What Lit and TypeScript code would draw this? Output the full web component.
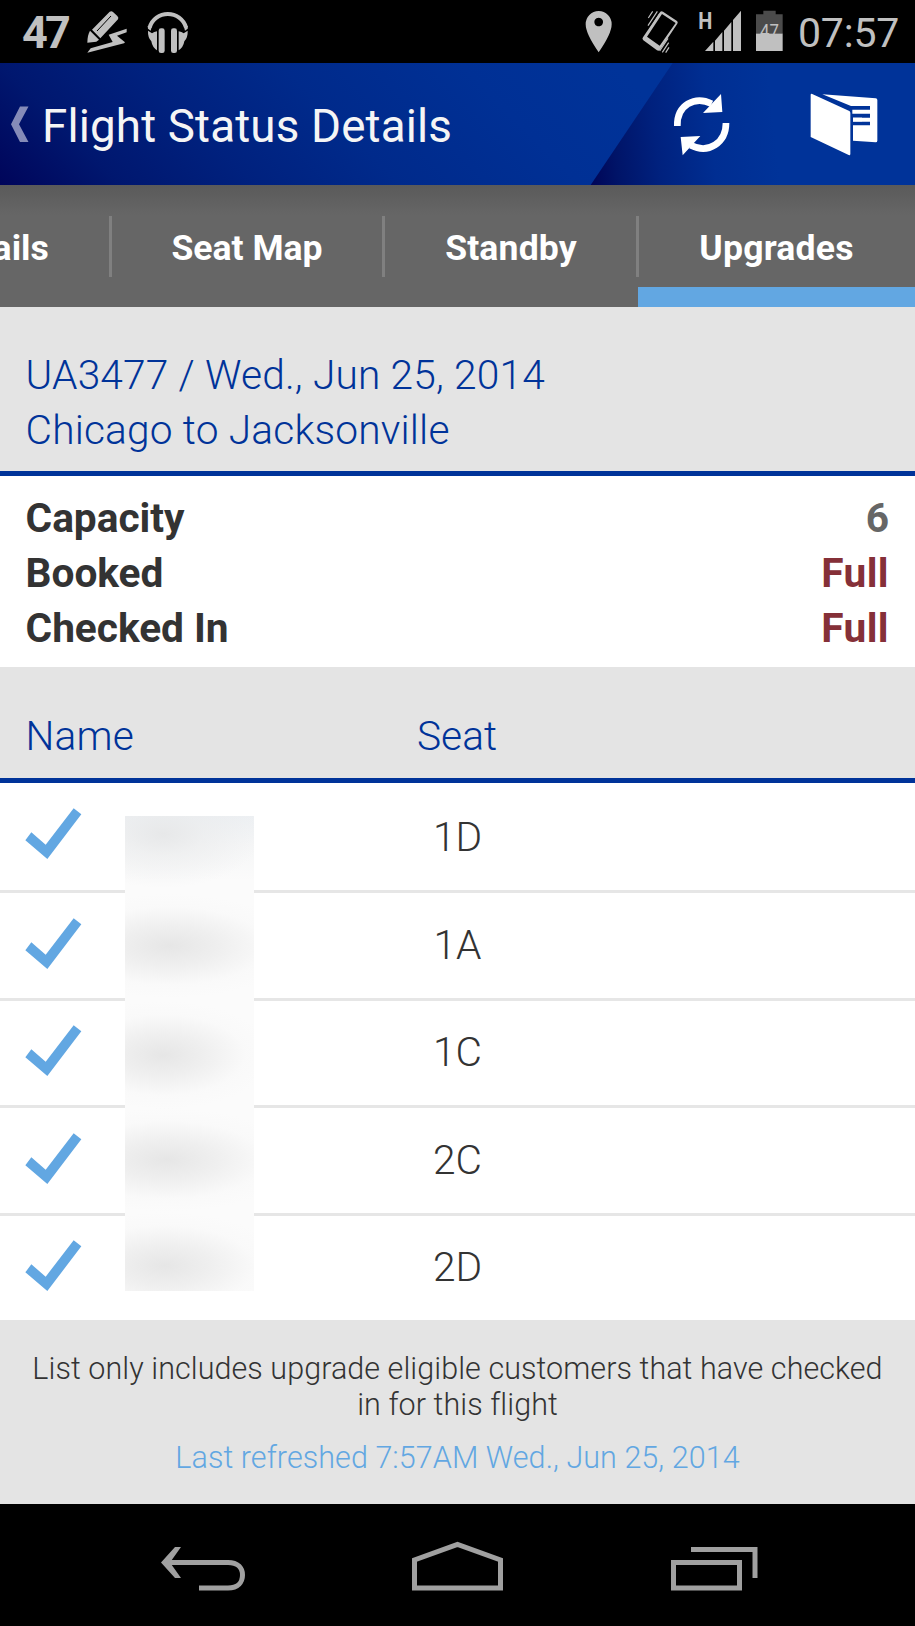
import { LitElement, html, css } from "lit";
import { customElement } from "lit/decorators.js";

const G = "#c0c0c0";

@customElement("status-bar")
class StatusBar extends LitElement {
  static styles = css`
    :host { display: flex; height: 63px; background: #000; color: #c0c0c0; font-family: Roboto, sans-serif; line-height: 65px; }
    svg { display: block; flex: none; }
    .pct { font-size: 45px; font-weight: 700; letter-spacing: -2.7px; margin-left: 22px; width: 63px; }
    .spacer { flex: 1; }
    .time { font-size: 41px; font-weight: 400; width: 117px; white-space: nowrap; letter-spacing: -0.2px; line-height: 67px; }
    .small { font: 700 23px Roboto, sans-serif; }
    .batt { font: 400 18px Roboto, sans-serif; }
  `;
  render() {
    return html`
      <span class="pct">47</span>
      <svg width="45" height="63" viewBox="255 0 135 189" fill=${G}>
        <path d="M329 35q6-3 10 1l13 12q5 5 2 10l-53 57-25-26z"/>
        <path d="M333 48l-42 45" stroke="#000" stroke-width="3" fill="none"/>
        <path d="M270 92l27 27-8 6-27 3q0-22 8-36z"/>
        <path d="M262 158l10-13 66-19-12-22 54-18v11l-29 10 24 20-3 3z"/>
      </svg>
      <svg width="150" height="63" viewBox="390 0 450 189" fill=${G}>
        <path d="M449 82A57 57 0 0 1 558 82" fill="none" stroke=${G} stroke-width="12"/>
        <path d="M443 78l12 3-3 11-8-6zM564 78l-12 3 3 11 8-6z"/>
        <rect x="476" y="85" width="18" height="74" rx="7"/><rect x="513" y="85" width="18" height="74" rx="7"/>
        <path d="M444 92l12 8q6-5 15-6v57q-14-9-17-27-11-12-10-32zM563 92l-12 8q-6-5-15-6v57q14-9 17-27 11-12 10-32z"/>
      </svg>
      <div class="spacer"></div>
      <svg width="238" height="63" viewBox="0 0 714 189" fill=${G}>
        <path fill-rule="evenodd" d="M116 33a39 39 0 0 1 39 40q0 28-39 84-39-56-39-84a39 39 0 0 1 39-40zm0 20a13 13 0 1 0 .1 0z"/>
        <path fill-rule="evenodd" d="M301 35q4-3 8 0l42 28q4 3 1 8l-52 78q-4 5-9 2l-41-30q-5-4-1-9zm5 7l-45 68 38 27 48-68z"/>
        <path d="M264 77l28-43M268 90l31-49M265 54l13-20M307 157l19-29M317 158l10-16M299 153l25-38" stroke=${G} stroke-width="3.5" fill="none"/>
        <text class="small" transform="translate(415 88) scale(2.6 3)">H</text>
        <path d="M435 153l25-28v28zM465 153v-31l22-26v57zM492 153V92l22-26v87zM519 153V60l24-28v121z"/>
        <path fill="#4b4b4b" d="M588 43h22V32h37v11h21v59h-80z"/><path d="M588 101h80v52h-80z"/>
        <text class="batt" transform="translate(600 110) scale(2.8 3)">47</text>
      </svg>
      <span class="time">07:57</span>`;
  }
}

@customElement("title-bar")
class TitleBar extends LitElement {
  static styles = css`
    :host { display: flex; align-items: stretch; height: 122px; font-family: Roboto, sans-serif;
      background: linear-gradient(45deg, #00055a 0, #00176f 86px, #00217e 180px, #002a8b 283px, #003095 411px, #003399 520px); color: #f5f5f5; }
    .back { flex: none; }
    h1 { margin: 0; font-size: 45.75px; font-weight: 400; line-height: 127px; letter-spacing: 0.15px; white-space: nowrap; width: 544px; }
    .actions { flex: none; }
    svg { display: block; }
  `;
  render() {
    return html`
      <svg class="back" width="42" height="122" viewBox="0 0 42 122"><path d="M20 43.500h8.500L19 61.200l9.500 17.800H20L11 61.200z" fill="#858bb8"/></svg>
      <h1>Flight Status Details</h1>
      <svg class="actions" width="329" height="122" viewBox="78 189 987 366" fill="#fff">
        <defs><linearGradient id="g" gradientUnits="userSpaceOnUse" x1="92" x2="650" y1="500" y2="440">
          <stop offset="0" stop-color="#000658"/><stop offset=".14" stop-color="#001468"/><stop offset=".36" stop-color="#00217e"/><stop offset=".66" stop-color="#002e92"/><stop offset="1" stop-color="#003399"/>
        </linearGradient></defs>
        <path d="M338 189H1065V555H92z" fill="url(#g)"/>
        <path d="M352 378C350 316 404 286 455 311M498 369C498 428 446 463 392 436" fill="none" stroke="#fff" stroke-width="20"/>
        <path d="M483 282l4 54-58 3zM362 411l59-3-53 58z"/>
        <path d="M755 281l113 52q3 2 3 6v124q-1 4-5 2L752 411V284q0-3 3-3z"/>
        <path d="M787 283l160 12q5 1 5 5v122q0 5-5 5l-68-5v-46h51v-11h-51v-12h51v-12h-53v-12h53v-11h-57z"/>
        <path d="M879 353h27v11h-27z"/>
      </svg>`;
  }
}

@customElement("tab-strip")
class TabStrip extends LitElement {
  static styles = css`
    :host { display: flex; height: 122px; background: linear-gradient(#5a5a5a, #666 30px); justify-content: flex-end; overflow: hidden; font-family: Roboto, sans-serif; }
    .tab { flex: none; box-sizing: border-box; display: flex; align-items: center; justify-content: center; color: #fff; font-weight: 700; font-size: 35.6px; border-bottom: 20px solid transparent; padding-top: 24px; white-space: nowrap; }
    .rule { flex: none; width: 3px; height: 61px; margin: 31px -1px 0 -2px; background: #808080; }
    .details { width: 235px; } .map { width: 273px; padding-right: 1px; } .standby { width: 254px; letter-spacing: 0.15px; }
    .upgrades { width: 277px; border-bottom-color: #62a7e2; letter-spacing: 0.2px; }
  `;
  render() {
    return html`<div class="tab details">Details</div><div class="rule"></div><div class="tab map">Seat Map</div><div class="rule"></div><div class="tab standby">Standby</div><div class="rule"></div><div class="tab upgrades">Upgrades</div>`;
  }
}

@customElement("app-root")
class AppRoot extends LitElement {
  static styles = css`
    :host { display: block; width: 915px; height: 1626px; overflow: hidden; background: #fff; font-family: Roboto, sans-serif; font-size: 40.67px; color: #333; }
    .info { box-sizing: border-box; height: 169px; background: #e4e4e4; border-bottom: 5px solid #039; color: #039; font-weight: 300; line-height: 55px; padding: 40.500px 25.600px 0; white-space: nowrap; letter-spacing: 0.17px; }
    .stats { box-sizing: border-box; height: 191px; padding: 15px 26px 0 25.600px; font-weight: 700; line-height: 55px; }
    .stat { display: flex; justify-content: space-between; }
    .label { letter-spacing: -0.05px; }
    .count { color: #666; } .full { color: #853038; letter-spacing: 0.4px; }
    .heads { box-sizing: border-box; height: 116px; background: #e4e4e4; border-bottom: 5px solid #039; color: #039; font-weight: 300; display: grid; grid-template-columns: 391px 81px 1fr; padding: 42px 0 0 25.600px; line-height: 55px; letter-spacing: 0.1px; }
    .heads span:nth-child(2) { text-align: center; }
    .list { position: relative; }
    .row { box-sizing: border-box; height: 107.500px; border-bottom: 3px solid #e6e6e6; display: grid; grid-template-columns: 417px 81px 1fr; font-weight: 300; line-height: 55px; }
    .row:first-child { height: 110px; }
    .row:last-of-type { border-bottom: 0; height: 104.500px; }
    .row svg { display: block; margin: 24.500px 0 0 25px; }
    .seat { text-align: center; padding-top: 24.500px; }
    .row:first-child .seat { padding-top: 27px; }
    .names { position: absolute; left: 125px; top: 32.500px; width: 129px; height: 475px; background:
      radial-gradient(ellipse 100px 54px at 38px 18px, #e7e8e9 0, #e9eaeb88 40%, #f4f4f400 100%),
      linear-gradient(#edf0f3, #f3f4f5aa 30px, #fbfbfb00 65px),
      radial-gradient(ellipse 130px 52px at 45px 130px, #e6e6e6 0, #e9e9e9aa 38%, #f5f5f544 75%, #f8f8f800 100%),
      radial-gradient(ellipse 110px 54px at 38px 239px, #e6e6e6 0, #e9e9e9aa 38%, #f5f5f544 75%, #f8f8f800 100%),
      radial-gradient(ellipse 130px 52px at 42px 344px, #e6e6e6 0, #e9e9e9aa 38%, #f5f5f544 75%, #f8f8f800 100%),
      radial-gradient(ellipse 120px 54px at 40px 450px, #e6e6e6 0, #e9e9e9aa 38%, #f5f5f544 75%, #f8f8f800 100%),
      #fbfbfb; }
    .foot { box-sizing: border-box; height: 184px; background: #e4e4e4; text-align: center; font-size: 30.500px; font-weight: 300; line-height: 35.500px; padding: 31px 26px 0; letter-spacing: 0.06px; }
    .foot p { margin: 0; }
    .foot .when { color: #62a7e2; margin-top: 18px; }
    .nav { display: block; background: #000; }
  `;
  render() {
    const seats = ["1D", "1A", "1C", "2C", "2D"];
    return html`
      <status-bar></status-bar>
      <title-bar></title-bar>
      <tab-strip></tab-strip>
      <div class="info"><div class="flight">UA3477 / Wed., Jun 25, 2014</div><div class="route">Chicago to Jacksonville</div></div>
      <div class="stats">
        <div class="stat"><span class="label">Capacity</span><span class="count">6</span></div>
        <div class="stat"><span class="label">Booked</span><span class="full">Full</span></div>
        <div class="stat"><span class="label">Checked In</span><span class="full">Full</span></div>
      </div>
      <div class="heads"><span>Name</span><span>Seat</span></div>
      <div class="list">
        ${seats.map((s) => html`<section class="row">
          <svg width="57" height="52" viewBox="75 83 171 156"><path d="M76 180l18-24 43 37 84-109 23 18-102 134z" fill="#62a7e2"/></svg>
          <span class="seat">${s}</span></section>`)}
        <div class="names"></div>
      </div>
      <div class="foot"><p>List only includes upgrade eligible customers that have checked in for this flight</p><p class="when">Last refreshed 7:57AM Wed., Jun 25, 2014</p></div>
      <svg class="nav" width="915" height="122" viewBox="0 1504 915 122" fill="none" stroke="#a0a0a0" stroke-width="5">
        <path d="M199 1588h29c10 0 14.500-6 14.500-13s-4.500-12.500-14.500-12.500h-62"/>
        <path d="M175 1547h6l-11 15.500 11 15.500h-6l-14-15.500z" fill="#a0a0a0" stroke="none"/>
        <path d="M414.500 1588v-28l43-15.500 43 15.500v28z"/>
        <path d="M673.500 1562.500h66v25.500h-66zM691 1549.500h64V1578"/>
      </svg>`;
  }
}
